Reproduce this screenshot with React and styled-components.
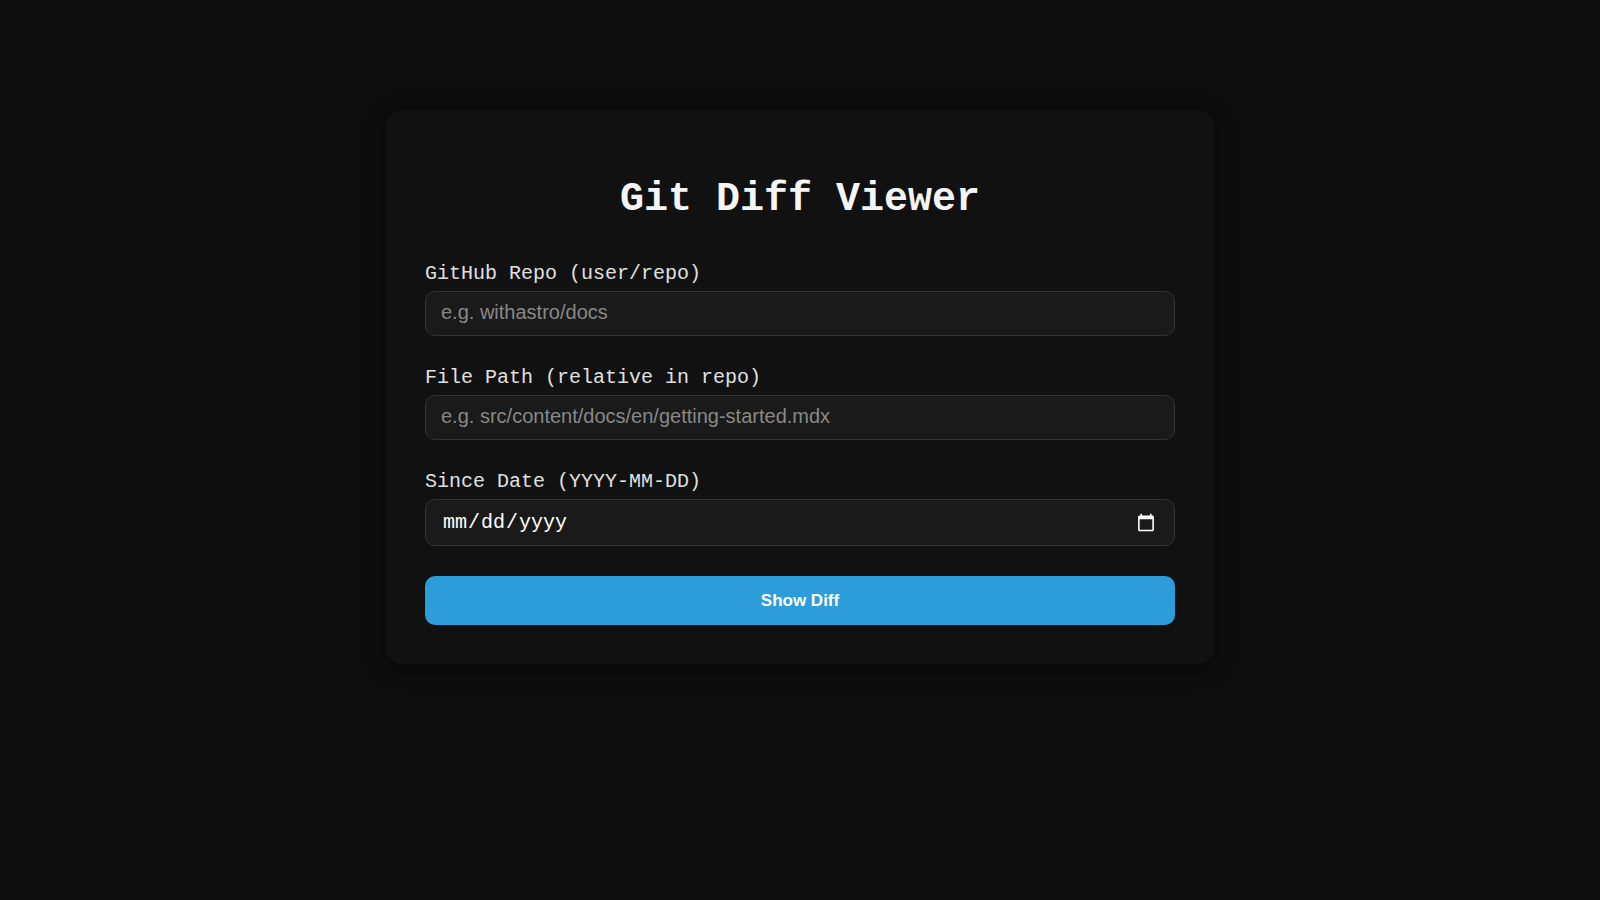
import React from "react";
import styled, { createGlobalStyle } from "styled-components";

const GlobalStyle = createGlobalStyle`
  *, *::before, *::after { box-sizing: border-box; }
  body {
    margin: 0;
    background: #0d0d0d;
    color: #f5f5f5;
    font-family: "Liberation Mono", monospace;
  }
`;

const Page = styled.main`
  display: flex;
  justify-content: center;
  padding: 110px 16px;
`;

const Card = styled.form`
  width: 100%;
  max-width: 828px;
  padding: 39px;
  border-radius: 16px;
  background: #111;
  box-shadow: 0 4px 20px rgba(0, 0, 0, 0.4);
`;

const Title = styled.h1`
  margin: 27px 0 38px;
  font-size: 40px;
  line-height: 48px;
  text-align: center;
`;

const Field = styled.div`
  display: flex;
  flex-direction: column;
  gap: 5px;
  margin-bottom: 30px;
`;

const Label = styled.label`
  font-size: 20px;
  line-height: 24px;
  color: #e0e0e0;
`;

const Input = styled.input`
  width: 100%;
  padding: 9px 15px 11px;
  border: 1px solid #333;
  border-radius: 10px;
  background: #1a1a1a;
  color: #fff;
  font-family: "Liberation Sans", sans-serif;
  font-size: 20px;
  color-scheme: dark;
  &::placeholder { color: #888; }
`;

const DateInput = styled(Input)`
  padding: 10px 16px;
  font-family: "Liberation Mono", monospace;
`;

const Submit = styled.button`
  width: 100%;
  padding: 15px 16px 14px;
  border: 0;
  border-radius: 10px;
  background: #2d9cdb;
  color: #fff;
  font-family: "Liberation Sans", sans-serif;
  font-size: 17px;
  line-height: 20px;
  font-weight: 700;
  cursor: pointer;
`;

export default function App() {
  return (
    <>
      <GlobalStyle />
      <Page>
        <Card onSubmit={(event) => event.preventDefault()}>
          <Title>Git Diff Viewer</Title>
          <Field>
            <Label htmlFor="repo">GitHub Repo (user/repo)</Label>
            <Input id="repo" type="text" placeholder="e.g. withastro/docs" />
          </Field>
          <Field>
            <Label htmlFor="path">File Path (relative in repo)</Label>
            <Input id="path" type="text" placeholder="e.g. src/content/docs/en/getting-started.mdx" />
          </Field>
          <Field>
            <Label htmlFor="since">Since Date (YYYY-MM-DD)</Label>
            <DateInput id="since" type="date" />
          </Field>
          <Submit type="submit">Show Diff</Submit>
        </Card>
      </Page>
    </>
  );
}
